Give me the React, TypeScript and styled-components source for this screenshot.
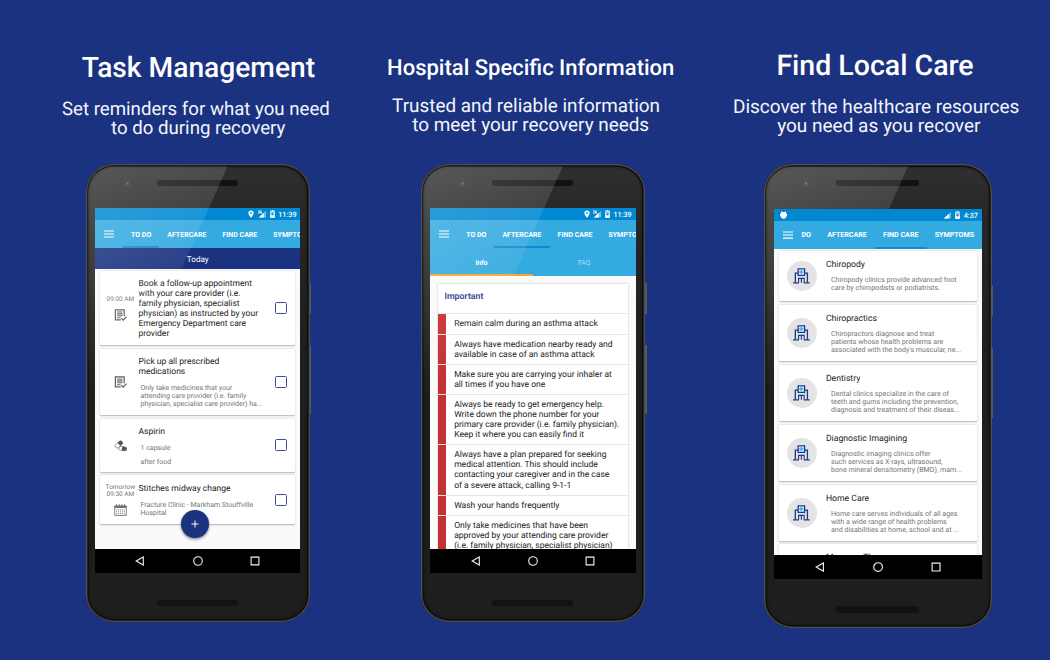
import React from "react";
import styled, { createGlobalStyle } from "styled-components";

const GlobalStyle = createGlobalStyle`
  *, *::before, *::after { box-sizing: border-box; }
  html, body { margin: 0; padding: 0; background: #1b3281; }
  body {
    width: 1050px; height: 660px; overflow: hidden;
    font-family: Roboto, "Liberation Sans", sans-serif;
    text-rendering: geometricPrecision;
  }
`;

const Stage = styled.main`
  display: grid;
  grid-template-columns: 365px 335px 350px;
  width: 1050px;
  height: 660px;
  overflow: hidden;
  background: #1b3281;
`;

const Column = styled.section<{ $inset: number }>`
  display: flex;
  flex-direction: column;
  align-items: center;
  min-width: 0;
  padding-left: ${(p) => p.$inset}px;
`;

const Heading = styled.header<{ $top: number }>`
  display: flex;
  flex: none;
  flex-direction: column;
  align-items: center;
  height: 164.4px;
  padding-top: ${(p) => p.$top}px;
  color: #fff;
  white-space: nowrap;
`;

const Title = styled.h1<{ $size: number; $shift: number; $gap: number }>`
  margin: 0 0 ${(p) => p.$gap}px;
  font-size: ${(p) => p.$size}px;
  font-weight: 500;
  line-height: 32px;
  transform: translateX(${(p) => p.$shift}px);
`;

const Subtitle = styled.div<{ $shift: number; $size?: number }>`
  font-size: ${(p) => p.$size ?? 18.65}px;
  line-height: 19px;
  color: #f3f5fb;
  transform: translateX(${(p) => p.$shift}px);
`;

/* ---------- device ---------- */

const Device = styled.div<{ $zoom: number }>`
  position: relative;
  flex: none;
  display: flex;
  flex-direction: column;
  align-items: center;
  width: 224.4px;
  height: 457.2px;
  zoom: ${(p) => p.$zoom};
  border-radius: 29px / 27px;
  background: linear-gradient(180deg, #303030 0, #262626 60px, #1e1e1e 200px, #1e1e1e 100%);
  box-shadow:
    inset 0 0 0 1px #4e4e4e,
    inset 0 0 0 1.6px #333,
    inset 0 0 0 2.6px #0d0d0d,
    inset 0 0 3px 2.6px #131313;
`;

const Gloss = styled.div<{ $front: boolean }>`
  position: absolute;
  inset: 2px;
  z-index: ${(p) => (p.$front ? 3 : 0)};
  border-radius: 27px / 25px;
  clip-path: polygon(0 0, 140px 0, 0 312px);
  background: linear-gradient(150deg, rgba(255, 255, 255, 0.2) 0, rgba(255, 255, 255, 0.12) 90px, rgba(255, 255, 255, 0.05) 150px, transparent 200px);
  pointer-events: none;
`;

const SideButton = styled.i<{ $top: number; $height: number }>`
  position: absolute;
  left: 224px;
  top: ${(p) => p.$top}px;
  width: 1.8px;
  height: ${(p) => p.$height}px;
  border-radius: 0 1px 1px 0;
  background: #57585c;
`;

const Forehead = styled.div`
  display: flex;
  flex: none;
  align-items: flex-start;
  width: 100%;
  height: 43.6px;
  padding: 15.3px 0 0 38px;
`;

const Lens = styled.i`
  width: 7px;
  height: 7px;
  border-radius: 50%;
  background: radial-gradient(circle, #6a6a78 0, #333 35%, #2f2f2f 60%, #444 100%);
`;

const Grille = styled.i`
  width: 81.5px;
  height: 6.4px;
  margin-left: 26px;
  border-radius: 3.2px;
  background: #121212;
`;

const Chin = styled.div`
  display: flex;
  flex: 1;
  width: 100%;
  padding: 26.6px 0 0 45px;
`;

const Screen = styled.div`
  position: relative;
  z-index: 1;
  display: flex;
  flex: none;
  flex-direction: column;
  width: 205.5px;
  height: 365px;
  overflow: hidden;
  background: #fafafa;
  color: #212121;
  white-space: nowrap;
`;

const StatusBar = styled.div`
  display: flex;
  flex: none;
  align-items: center;
  height: 12px;
  padding: 0.6px 4px 0 6px;
  background: #0288d1;
  color: #fff;
  font-size: 7.2px;
  font-weight: 500;
`;

const Spacer = styled.span`
  flex: 1;
`;

const Clock = styled.span`
  margin-left: 3.6px;
`;

const StatusGlyph = styled.svg`
  flex: none;
  height: 8px;
  margin-left: 3.6px;
`;

const TabBar = styled.div`
  display: flex;
  flex: none;
  height: 28px;
  overflow: hidden;
  background: #33aae0;
`;

const MenuIcon = styled.svg`
  flex: none;
  width: 10px;
  height: 8px;
  margin: 10.3px 0 0 9px;
`;

const TabStrip = styled.nav<{ $lead: number }>`
  display: flex;
  flex: 1;
  margin-left: ${(p) => p.$lead}px;
`;

const Tab = styled.span<{ $active?: boolean; $flush?: boolean }>`
  flex: none;
  height: 28px;
  padding: 0.6px 8px 0 ${(p) => (p.$flush ? 0 : 8)}px;
  border-bottom: 2px solid ${(p) => (p.$active ? "#0f8ad2" : "transparent")};
  color: #fff;
  font-size: 7.02px;
  font-weight: 700;
  line-height: 27.4px;
`;

const Body = styled.div`
  position: relative;
  flex: 1;
  min-height: 0;
  overflow: hidden;
`;

const NavBar = styled.div`
  display: flex;
  flex: none;
  align-items: center;
  justify-content: space-between;
  height: 23.8px;
  padding: 0.6px 40.2px 0 40.4px;
  background: #000;
`;

const NavGlyph = styled.svg`
  width: 10px;
  height: 10px;
  fill: none;
  stroke: #f2f2f2;
  stroke-width: 1.1;
`;

/* ---------- shared card pieces ---------- */

const DayBar = styled.div`
  flex: none;
  height: 21.2px;
  background: #1b3281;
  color: #fff;
  font-size: 8.1px;
  line-height: 22.8px;
  text-align: center;
`;

const TaskList = styled.div`
  display: flex;
  flex-direction: column;
  gap: 3.8px;
  padding: 1.5px 5.2px 0 5.5px;
`;

const Card = styled.article<{ $height: number }>`
  display: flex;
  flex: none;
  height: ${(p) => p.$height}px;
  border-radius: 1px;
  background: #fff;
  box-shadow: 0 0.8px 1.6px rgba(0, 0, 0, 0.28), 0 0 1px rgba(0, 0, 0, 0.06);
`;

const TaskSide = styled.div`
  display: flex;
  flex: none;
  flex-direction: column;
  align-items: center;
  justify-content: center;
  width: 38px;
  padding: 1px 0 0 1.8px;
  color: #757575;
  font-size: 6.5px;
  line-height: 7.4px;
  text-align: center;
`;

const TaskIcon = styled.svg<{ $gap: number }>`
  width: 13px;
  height: 12px;
  margin-top: ${(p) => p.$gap}px;
`;

const TaskText = styled.div`
  flex: 1;
  padding-top: 8.5px;
`;

const TaskTitle = styled.div`
  font-size: 8.53px;
  line-height: 10.07px;
`;

const TaskNote = styled.div<{ $loose?: boolean }>`
  margin-top: ${(p) => (p.$loose ? 5 : 6.8)}px;
  padding-left: 2px;
  color: #757575;
  font-size: 7px;
  line-height: ${(p) => (p.$loose ? 13.6 : 8.1)}px;
`;

const Checkbox = styled.span`
  align-self: center;
  width: 12px;
  height: 12px;
  margin-right: 8px;
  border: 1.2px solid #3d4d9e;
  border-radius: 1.5px;
`;

const AddButton = styled.button`
  position: absolute;
  left: 86px;
  bottom: 11.5px;
  display: flex;
  align-items: center;
  justify-content: center;
  width: 28px;
  height: 28px;
  padding: 0;
  border: 0;
  border-radius: 50%;
  background: #1b3281;
  box-shadow: 0 1.5px 3px rgba(0, 0, 0, 0.45);
`;

/* ---------- aftercare ---------- */

const SubTabs = styled.div`
  display: flex;
  flex: none;
  height: 27.8px;
  background: #33aae0;
`;

const SubTab = styled.span<{ $active?: boolean }>`
  flex: 1;
  border-bottom: 2.2px solid ${(p) => (p.$active ? "#f9a825" : "transparent")};
  color: ${(p) => (p.$active ? "#fff" : "#b5dff4")};
  font-size: 6.9px;
  font-weight: ${(p) => (p.$active ? 700 : 400)};
  line-height: 30px;
  text-align: center;
`;

const Advice = styled.div`
  margin: 8px 8px 0;
  background: #fff;
  box-shadow: 0 0 1.5px rgba(0, 0, 0, 0.3);
`;

const AdviceHead = styled.div`
  height: 29.6px;
  padding-left: 6.3px;
  color: #283990;
  font-size: 8.8px;
  font-weight: 600;
  line-height: 27.8px;
`;

const AdviceRow = styled.div`
  padding: 5px 0 4.1px 16px;
  border-top: 1px solid #e6e6e6;
  background: linear-gradient(90deg, #c53034 8px, #fff 8px) padding-box;
  font-size: 8.54px;
  line-height: 10.07px;
`;

/* ---------- find care ---------- */

const CareList = styled.div`
  display: flex;
  flex-direction: column;
  gap: 3.6px;
  padding: 1.7px 5.2px 0 5.5px;
`;

const Badge = styled.span`
  display: flex;
  flex: none;
  align-self: center;
  align-items: center;
  justify-content: center;
  width: 29.5px;
  height: 29.5px;
  margin-left: 7.5px;
  border-radius: 50%;
  background: #e4e4e4;
`;

const CareText = styled.div`
  padding: 9px 0 0 9.2px;

  ${Card}:last-child & {
    padding-top: 8px;
  }
`;

const CareNote = styled.div`
  margin-top: 5.9px;
  padding-left: 5px;
  color: #757575;
  font-size: 6.98px;
  line-height: 8.05px;
`;

/* ---------- glyphs ---------- */

const Lines = ({ of }: { of: string[] }) => (
  <>
    {of.map((line) => (
      <div key={line}>{line}</div>
    ))}
  </>
);

const Hamburger = () => (
  <MenuIcon viewBox="0 0 10 8" stroke="#fff" strokeWidth="1.1">
    <path d="M0 1h10M0 4h10M0 7h10" />
  </MenuIcon>
);

const Pin = () => (
  <StatusGlyph viewBox="0 0 6 8" width="6" fill="#fff">
    <path fillRule="evenodd" d="M3 .4A2.6 2.6 0 0 0 .4 3C.4 5 3 7.7 3 7.7S5.6 5 5.6 3A2.6 2.6 0 0 0 3 .4Zm0 1.7a.9.9 0 1 1 0 1.8.9.9 0 0 1 0-1.8Z" />
  </StatusGlyph>
);

const Signal = ({ threeG }: { threeG?: boolean }) => (
  <StatusGlyph viewBox="0 0 8 8" width="8" fill="#fff">
    <path d="M.8 7.5H8V.8Z" opacity=".45" />
    <path d="M.8 7.5h5V2.7Z" />
    {threeG && <path d="M0 .6h1.6v2.8H0v-.6h.9v-.5H.3v-.5h.6v-.6H0ZM2.2.6h1.6v.7h-.9v1.4h.3v-.6h.8v1.3H2.2Z" />}
  </StatusGlyph>
);

const Battery = () => (
  <StatusGlyph viewBox="0 0 5 8" width="5">
    <path d="M1.7.3h1.6v.8h1.3v6.5H.4V1.1h1.3Z" fill="#fff" opacity=".5" />
    <path d="M.4 5.2h4.2v2.4H.4ZM1.7.3h1.6v.8H1.7Z" fill="#fff" />
    <path d="M.4 1.1h4.2v6.5H.4Z" fill="none" stroke="#fff" strokeWidth=".7" />
    <path d="M2.8 2.4 1.7 4.7h.7V6l1-2.1h-.6Z" fill="#0288d1" />
  </StatusGlyph>
);

const Droid = () => (
  <svg width="7" height="8" viewBox="0 0 7 8" fill="#fff">
    <path d="M1.3.3 2 1.1h3L5.7.3l.5.4-.5.9c.5.4.6.8.6 1.3H7v2.4h-.7C6.2 6.9 5 7.7 3.5 7.7S.8 6.9.7 5.300H0V2.900h.7c0-.5.1-.9.6-1.300L.8.7Z" />
  </svg>
);

const Checklist = ({ gap = 0 }: { gap?: number }) => (
  <TaskIcon $gap={gap} viewBox="0 0 13 12" fill="none" stroke="#606060">
    <path d="M10.2 7.2V.9H1.4v9.9h5.4" strokeWidth="1.2" />
    <path d="M3.1 3h5.4M3.1 4.9h5.4M3.1 6.8h5.4M3.1 8.7h3.5" strokeWidth="1.1" />
    <path d="m7.4 9.2 1.8 1.9 3.3-3.5" strokeWidth="1.3" />
  </TaskIcon>
);

const Pills = () => (
  <TaskIcon $gap={0} viewBox="0 0 13 12">
    <g transform="rotate(-42 5 4.5)">
      <rect x=".6" y="2.3" width="8.6" height="4.2" rx="2.1" fill="#fff" stroke="#666" strokeWidth=".6" />
      <path d="M5 2.3h2.2a2.1 2.1 0 0 1 0 4.2H5Z" fill="#555" />
    </g>
    <g transform="rotate(8 9 9)">
      <rect x="4.7" y="6.7" width="8" height="3.9" rx="1.95" fill="#fff" stroke="#666" strokeWidth=".6" />
      <path d="M8 6.7h2.75a1.95 1.95 0 0 1 0 3.9H8Z" fill="#555" />
    </g>
  </TaskIcon>
);

const Calendar = () => (
  <TaskIcon $gap={5.8} viewBox="0 0 13 12" fill="none" stroke="#666">
    <path d="M.7 1.9h11.6v9.5H.7Z" strokeWidth=".8" />
    <path d="M.7 3h11.6" strokeWidth="1.8" />
    <path d="M2.5.2v1.8M5.2.2v1.8M7.9.2v1.8M10.5.2v1.8" strokeWidth=".9" />
    <path d="M2.2 5.9h8.7M2.2 7.8h8.7M2.2 9.7h8.7" strokeWidth="1" strokeDasharray="1.1 .8" opacity=".75" />
  </TaskIcon>
);

const Hospital = () => (
  <svg width="16.5" height="15.5" viewBox="0 0 16.5 15.5" fill="none" stroke="#1f3a8c" strokeWidth="1.3">
    <path d="M0 14.6h5.9M10.6 14.6h5.9" />
    <path d="M2.3 14.6V5h2.8M14.2 14.6V5h-2.8" />
    <path d="M5.1.8h6.3v6.4H5.1Z" fill="#eef8fd" />
    <path d="M5.5 14.6v-4.4H11v4.4M8.25 10.2v4.4" strokeWidth="1.1" />
    <path d="M8.25 1.9v4.2M6.1 4h4.3" stroke="#35b1ee" strokeWidth="1.5" />
  </svg>
);

const Plus = () => (
  <svg width="8" height="8" viewBox="0 0 8 8" stroke="#fff" strokeWidth="1">
    <path d="M4 .5v7M.5 4h7" />
  </svg>
);

const SystemNav = () => (
  <NavBar>
    <NavGlyph viewBox="0 0 10 10"><path d="M8.3.9v8.2L1.2 5Z" /></NavGlyph>
    <NavGlyph viewBox="0 0 10 10"><circle cx="5" cy="5" r="4.3" /></NavGlyph>
    <NavGlyph viewBox="0 0 10 10"><path d="M1.1 1.1h7.8v7.8H1.1Z" /></NavGlyph>
  </NavBar>
);

const Phone = ({ zoom = 1, glossFront = true, children }: { zoom?: number; glossFront?: boolean; children: React.ReactNode }) => (
  <Device $zoom={zoom}>
    <Forehead>
      <Lens />
      <Grille />
    </Forehead>
    <Screen>
      {children}
      <SystemNav />
    </Screen>
    <Chin>
      <Grille />
    </Chin>
    <Gloss $front={glossFront} />
    <SideButton $top={118.5} $height={31} />
    <SideButton $top={180.5} $height={69} />
  </Device>
);

const EveningStatus = () => (
  <StatusBar>
    <Spacer />
    <Pin />
    <Signal threeG />
    <Battery />
    <Clock>11:39</Clock>
  </StatusBar>
);

/* ---------- content ---------- */

const advice = [
  ["Remain calm during an asthma attack"],
  ["Always have medication nearby ready and", "available in case of an asthma attack"],
  ["Make sure you are carrying your inhaler at", "all times if you have one"],
  ["Always be ready to get emergency help.", "Write down the phone number for your", "primary care provider (i.e. family physician).", "Keep it where you can easily find it"],
  ["Always have a plan prepared for seeking", "medical attention. This should include", "contacting your caregiver and in the case", "of a severe attack, calling 9-1-1"],
  ["Wash your hands frequently"],
  ["Only take medicines that have been", "approved by your attending care provider", "(i.e. family physician, specialist physician)"],
];

const clinics = [
  { name: "Chiropody", height: 49.3, note: ["Chiropody clinics provide advanced foot", "care by chiropodists or podiatrists."] },
  { name: "Chiropractics", height: 55.5, note: ["Chiropractors diagnose and treat", "patients whose health problems are", "associated with the body's muscular, ne..."] },
  { name: "Dentistry", height: 55.5, note: ["Dental clinics specialize in the care of", "teeth and gums including the prevention,", "diagnosis and treatment of their diseas..."] },
  { name: "Diagnostic Imagining", height: 55.5, note: ["Diagnostic imaging clinics offer", "such services as X-rays, ultrasound,", "bone mineral densitometry (BMD), mam..."] },
  { name: "Home Care", height: 55.5, note: ["Home care serves individuals of all ages", "with a wide range of health problems", "and disabilities at home, school and at ..."] },
  { name: "Massage Therapy", height: 55.5, note: [] },
];

export default function App() {
  return (
    <>
      <GlobalStyle />
      <Stage>
        <Column $inset={30.5}>
          <Heading $top={52}>
            <Title $size={28.2} $shift={0.7} $gap={15.7}>Task Management</Title>
            <Subtitle $shift={-1.8}>Set reminders for what you need</Subtitle>
            <Subtitle $shift={0.5}>to do during recovery</Subtitle>
          </Heading>
          <Phone>
            <EveningStatus />
            <TabBar>
              <Hamburger />
              <TabStrip $lead={9}>
                <Tab $active>TO DO</Tab>
                <Tab>AFTERCARE</Tab>
                <Tab>FIND CARE</Tab>
                <Tab>SYMPTOMS</Tab>
              </TabStrip>
            </TabBar>
            <DayBar>Today</DayBar>
            <Body>
              <TaskList>
                <Card $height={74.3}>
                  <TaskSide>09:00 AM<Checklist gap={6} /></TaskSide>
                  <TaskText>
                    <TaskTitle>
                      <Lines of={["Book a follow-up appointment", "with your care provider (i.e.", "family physician, specialist", "physician) as instructed by your", "Emergency Department care", "provider"]} />
                    </TaskTitle>
                  </TaskText>
                  <Checkbox />
                </Card>
                <Card $height={66}>
                  <TaskSide><Checklist /></TaskSide>
                  <TaskText>
                    <TaskTitle><Lines of={["Pick up all prescribed", "medications"]} /></TaskTitle>
                    <TaskNote>
                      <Lines of={["Only take medicines that your", "attending care provider (i.e. family", "physician, specialist care provider) ha..."]} />
                    </TaskNote>
                  </TaskText>
                  <Checkbox />
                </Card>
                <Card $height={53}>
                  <TaskSide><Pills /></TaskSide>
                  <TaskText>
                    <TaskTitle>Aspirin</TaskTitle>
                    <TaskNote $loose><Lines of={["1 capsule", "after food"]} /></TaskNote>
                  </TaskText>
                  <Checkbox />
                </Card>
                <Card $height={48.5}>
                  <TaskSide>Tomorrow<br />09:30 AM<Calendar /></TaskSide>
                  <TaskText>
                    <TaskTitle>Stitches midway change</TaskTitle>
                    <TaskNote><Lines of={["Fracture Clinic - Markham Stouffville", "Hospital"]} /></TaskNote>
                  </TaskText>
                  <Checkbox />
                </Card>
              </TaskList>
              <AddButton aria-label="Add task"><Plus /></AddButton>
            </Body>
          </Phone>
        </Column>

        <Column $inset={0.8}>
          <Heading $top={53}>
            <Title $size={22} $shift={-2.2} $gap={11.4}>Hospital Specific Information</Title>
            <Subtitle $size={18.9} $shift={-6.8}>Trusted and reliable information</Subtitle>
            <Subtitle $size={18.9} $shift={-2.2}>to meet your recovery needs</Subtitle>
          </Heading>
          <Phone>
            <EveningStatus />
            <TabBar>
              <Hamburger />
              <TabStrip $lead={9}>
                <Tab>TO DO</Tab>
                <Tab $active>AFTERCARE</Tab>
                <Tab>FIND CARE</Tab>
                <Tab>SYMPTOMS</Tab>
              </TabStrip>
            </TabBar>
            <SubTabs>
              <SubTab $active>Info</SubTab>
              <SubTab>FAQ</SubTab>
            </SubTabs>
            <Body>
              <Advice>
                <AdviceHead>Important</AdviceHead>
                {advice.map((lines) => (
                  <AdviceRow key={lines[0]}><Lines of={lines} /></AdviceRow>
                ))}
              </Advice>
            </Body>
          </Phone>
        </Column>

        <Column $inset={5.6}>
          <Heading $top={50.4}>
            <Title $size={28.5} $shift={-2.8} $gap={14.7}>Find Local Care</Title>
            <Subtitle $size={19} $shift={-1.7}>Discover the healthcare resources</Subtitle>
            <Subtitle $size={19} $shift={1}>you need as you recover</Subtitle>
          </Heading>
          <Phone zoom={1.015} glossFront={false}>
            <StatusBar>
              <Droid />
              <Spacer />
              <Signal />
              <Battery />
              <Clock>4:37</Clock>
            </StatusBar>
            <TabBar>
              <Hamburger />
              <TabStrip $lead={8.5}>
                <Tab $flush>DO</Tab>
                <Tab>AFTERCARE</Tab>
                <Tab $active>FIND CARE</Tab>
                <Tab>SYMPTOMS</Tab>
              </TabStrip>
            </TabBar>
            <Body>
              <CareList>
                {clinics.map((clinic) => (
                  <Card key={clinic.name} $height={clinic.height}>
                    <Badge><Hospital /></Badge>
                    <CareText>
                      <TaskTitle>{clinic.name}</TaskTitle>
                      <CareNote><Lines of={clinic.note} /></CareNote>
                    </CareText>
                  </Card>
                ))}
              </CareList>
            </Body>
          </Phone>
        </Column>
      </Stage>
    </>
  );
}
